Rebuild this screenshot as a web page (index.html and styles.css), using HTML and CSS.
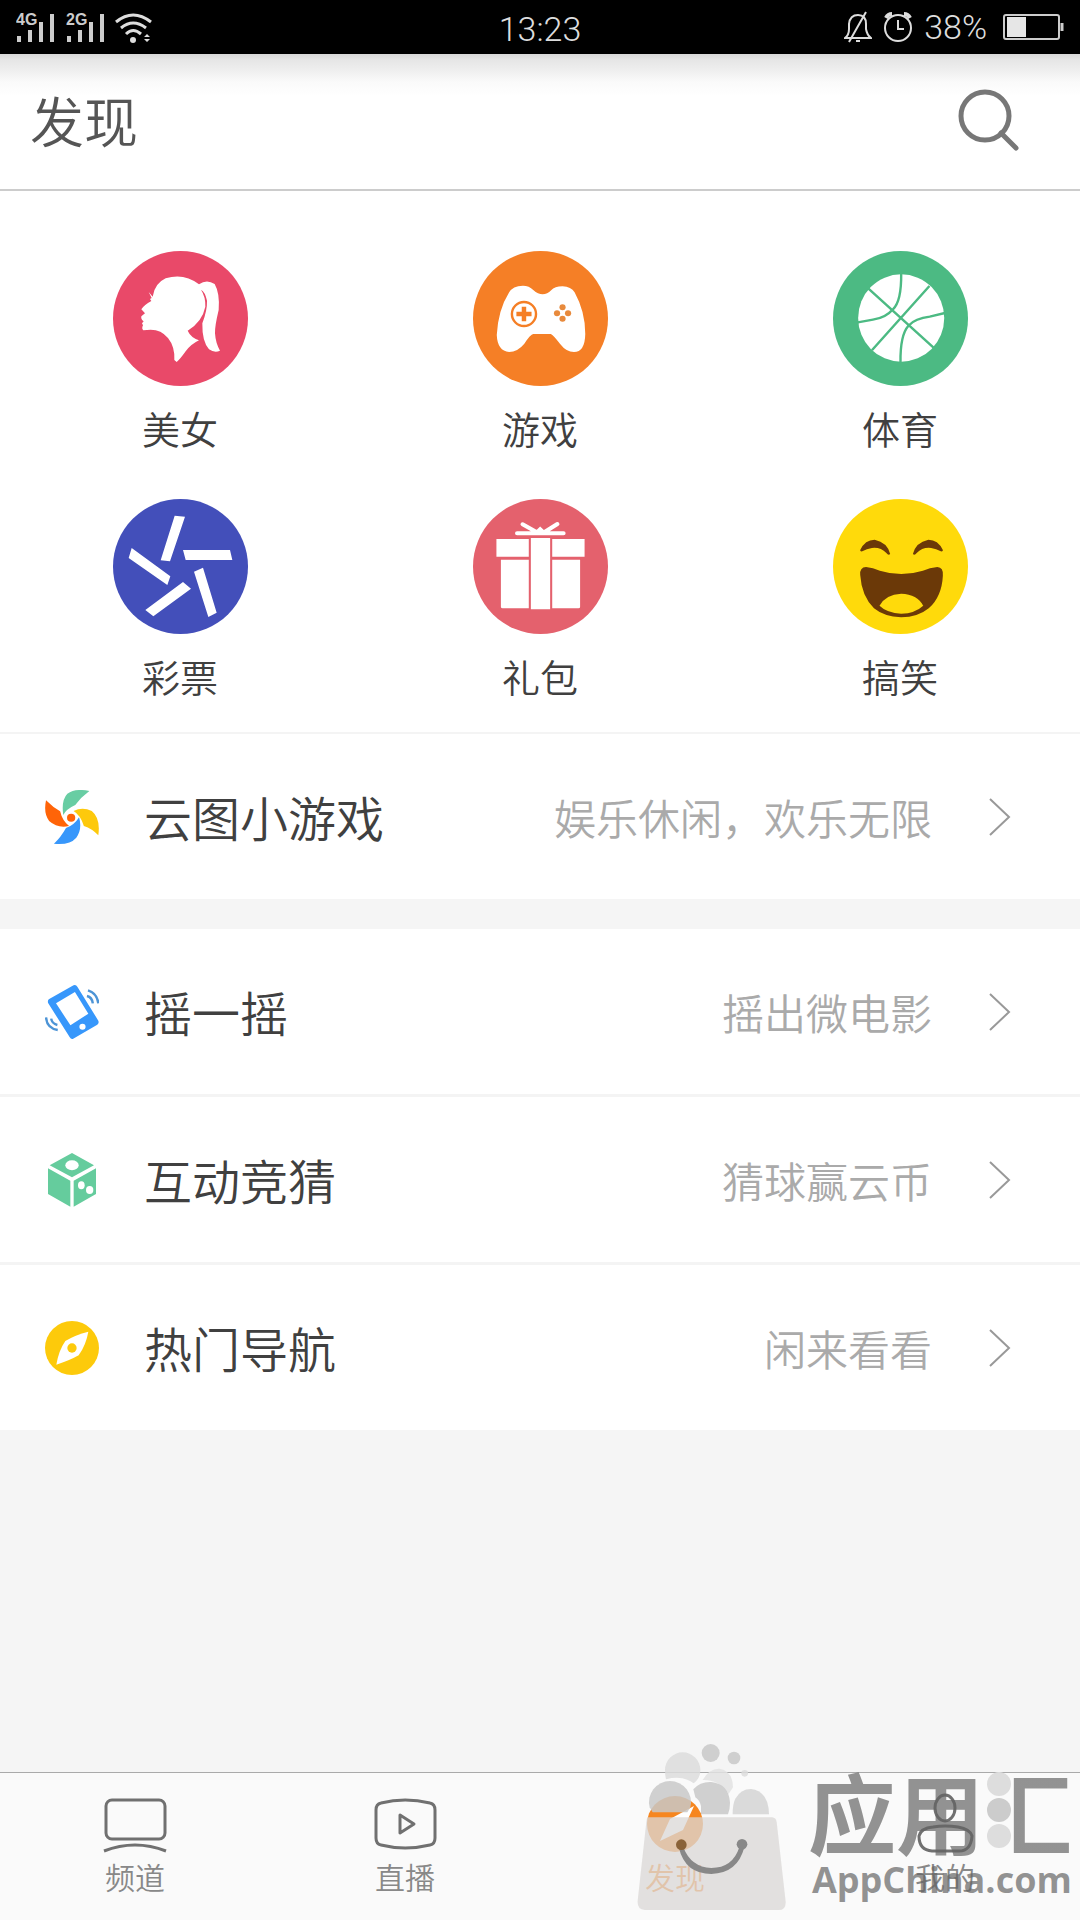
FILE: index.html
```html
<!DOCTYPE html>
<html lang="zh-CN">
<head>
<meta charset="utf-8">
<meta name="viewport" content="width=device-width, initial-scale=1">
<title>发现</title>
<link rel="stylesheet" href="styles.css">
</head>
<body>
<div class="app">
  <div class="status">
    <div class="status-side">
      <svg class="signals" viewBox="0 0 90 32" width="90" height="32" fill="#ccc">
        <path d="M1 25h4v6h-4zM12 19h4v12h-4zM23 11h4v20h-4zM34 3h4v28h-4zM51 25h4v6h-4zM62 19h4v12h-4zM73 11h4v20h-4zM84 3h4v28h-4z"/>
        <text class="net" x="0" y="14">4G</text>
        <text class="net" x="50" y="14">2G</text>
      </svg>
      <svg viewBox="0 0 38 32" width="38" height="32" fill="none" stroke="#ddd" stroke-width="3">
        <path d="M1 11Q18 -3 36 11M6 17Q18 7 31 17M11 23Q18 16 26 23"/>
        <circle cx="18" cy="29" r="3" fill="#ddd" stroke="none"/>
        <path d="M29 26l3-3 3 3zM29 28h6l-3 3z" fill="#ddd" stroke="none"/>
      </svg>
    </div>
    <time class="clock">13:23</time>
    <div class="status-side status-right">
      <svg viewBox="0 0 28 32" width="28" height="32" fill="none" stroke="#ddd" stroke-width="2">
        <path d="M1 27Q5 24 5 18V13Q6 4 14 4Q22 4 22 13V18Q23 24 27 27ZM22 1L5 31M12 30h4"/>
      </svg>
      <svg viewBox="0 0 28 32" width="28" height="32" fill="none" stroke="#ddd" stroke-width="2">
        <circle cx="14" cy="17" r="13"/><path d="M14 9v9h6"/><path d="M2 7q2-4 6-4M26 7q-2-4-6-4" stroke-width="4"/>
      </svg>
      <span class="percent">38%</span>
      <svg viewBox="0 0 61 32" width="61" height="32" fill="none" stroke="#ccc" stroke-width="2">
        <rect x="1" y="4" width="55" height="24" rx="2"/><path d="M4 6h19v20h-19z" fill="#e6e6e6" stroke="none"/><path d="M59 12v8" stroke-width="3"/>
      </svg>
    </div>
  </div>

  <header class="header">
    <h1 class="title">发现</h1>
    <button class="search" type="button" aria-label="搜索">
      <svg viewBox="0 0 62 64" width="62" height="64" fill="none" stroke="#777" stroke-width="5">
        <circle cx="27" cy="28" r="24"/><path d="M43 45L58 60" stroke-linecap="round"/>
      </svg>
    </button>
  </header>

  <main class="main">
    <nav class="tiles" aria-label="分类">
      <a class="tile" href="#beauty">
        <span class="disc disc-pink"><svg viewBox="67 63 405 405" fill="#fff">
          <path d="M186 200Q192 160 225 145Q280 128 325 163Q348 146 372 162Q388 190 384 240Q372 290 373 310Q375 340 388 362Q372 370 355 358Q334 335 335 280Q350 240 349 212Q343 185 331 179Q345 200 344 230Q335 275 291 302Q300 322 325 331Q300 343 285 364Q268 388 258 396L251 390Q253 350 232 324Q212 299 180 299L158 301Q152 296 157 286L154 280L159 274Q150 268 152 259L163 250L152 238Q160 225 182 213L178 207L183 204L174 186Z"/>
        </svg></span>
        <span class="tile-label">美女</span>
      </a>
      <a class="tile" href="#game">
        <span class="disc disc-orange"><svg viewBox="65 63 392 405" preserveAspectRatio="none" fill="#fff">
          <path d="M170 187Q180 168 210 167Q228 167 240 180Q254 193 267 193Q281 193 292 181Q302 169 325 169Q350 170 360 187Q391 245 391 312Q390 366 358 366Q336 366 318 342Q298 315 291 312H240Q232 313 214 341Q194 366 170 366Q136 363 134 315Q138 240 170 187Z"/>
          <ellipse cx="213" cy="252" rx="35" ry="36" fill="none" stroke="#f57f26" stroke-width="7"/>
          <path d="M213 230v44M191 252h44" stroke="#f57f26" stroke-width="13"/>
          <g fill="#e88a3c"><circle cx="325" cy="232" r="9"/><circle cx="325" cy="266" r="9"/><circle cx="309" cy="250" r="9"/><circle cx="341" cy="250" r="9"/></g>
        </svg></span>
        <span class="tile-label">游戏</span>
      </a>
      <a class="tile" href="#sport">
        <span class="disc disc-green"><svg viewBox="1109 63 392 405" preserveAspectRatio="none" fill="none" stroke="#4cba83" stroke-width="7">
          <ellipse cx="1307" cy="264" rx="125" ry="131" fill="#fff" stroke="none"/>
          <path d="M1212 176L1401 353M1389 168L1222 361M1307 130Q1308 215 1283 238Q1262 264 1225 269L1181 277M1305 396Q1304 315 1328 287Q1348 265 1390 260L1434 249"/>
        </svg></span>
        <span class="tile-label">体育</span>
      </a>
      <a class="tile" href="#lottery">
        <span class="disc disc-blue"><svg viewBox="66 57 405 405" fill="#fff">
          <path d="M251 107L282 110L237 244L209 241ZM276 210H417L424 240H284ZM336 263L377 398L352 411L309 275ZM276 306L300 326L187 409L163 390ZM122 204L238 289L229 315L113 234Z"/>
        </svg></span>
        <span class="tile-label">彩票</span>
      </a>
      <a class="tile" href="#gift">
        <span class="disc disc-rose"><svg viewBox="65 57 392 405" preserveAspectRatio="none" fill="#fff">
          <path d="M133 177H227V230H133ZM295 177H389V230H295ZM146 239H227V385H151Q146 385 146 380ZM295 239H376V380Q376 385 371 385H295ZM233 174H289V388H233Z"/>
          <path d="M193 160H328M209 133L249 156M310 132L273 156M252 156L260 148L268 156" fill="none" stroke="#fff" stroke-width="12" stroke-linecap="round"/>
        </svg></span>
        <span class="tile-label">礼包</span>
      </a>
      <a class="tile" href="#funny">
        <span class="disc disc-yellow"><svg viewBox="1109 57 392 405" preserveAspectRatio="none" fill="#6b3908">
          <path d="M1188 210Q1202 179 1230 179Q1267 187 1275 222Q1270 228 1264 219Q1247 201 1222 204Q1207 206 1194 214Q1187 215 1188 210ZM1428 210Q1414 179 1386 179Q1349 187 1341 222Q1346 228 1352 219Q1369 201 1394 204Q1409 206 1422 214Q1429 215 1428 210ZM1188 285Q1186 262 1205 261Q1225 263 1245 272Q1307 292 1370 272Q1390 263 1412 261Q1430 262 1428 287Q1425 350 1387 385Q1355 412 1307 412Q1257 410 1228 385Q1192 348 1188 285Z"/>
          <path d="M1244 377Q1262 343 1307 341Q1354 343 1371 377Q1347 400 1307 401Q1266 399 1244 377Z" fill="#ffda0b"/>
        </svg></span>
        <span class="tile-label">搞笑</span>
      </a>
    </nav>

    <div class="group">
      <a class="row" href="#minigame">
        <svg class="row-icon" viewBox="131 180 157 162" preserveAspectRatio="none">
          <path d="M184 255Q178 210 196 191Q220 174 260 183Q236 201 219 225Q193 237 184 255Z" fill="#68cda3"/>
          <path d="M214 243Q240 229 267 243Q293 265 286 316Q268 296 244 288Q234 255 214 243Z" fill="#fdc90c"/>
          <path d="M134 211Q154 232 175 244Q181 272 201 288Q168 296 143 273Q126 250 134 211Z" fill="#ff6408"/>
          <path d="M230 262Q240 296 222 323Q203 346 157 341Q177 322 192 294Q216 286 230 262Z" fill="#3797fb"/>
          <circle cx="207" cy="263" r="12" fill="#ff6408"/>
        </svg>
        <span class="row-title">云图小游戏</span>
        <span class="row-note">娱乐休闲，欢乐无限</span>
        <svg class="chevron" viewBox="0 0 22 38"><path d="M1 1L20 19L1 37"/></svg>
      </a>
    </div>

    <div class="group">
      <a class="row" href="#shake">
        <svg class="row-icon" viewBox="131 765 157 162" preserveAspectRatio="none" fill="none" stroke="#4d94d6" stroke-width="7">
          <path d="M142 808L214 766Q221 763 225 770L286 872Q289 879 283 884L213 926Q207 929 203 922L140 819Q138 812 142 808ZM163 820L205 886L257 851L218 786Z" fill="#3797fb" fill-rule="evenodd" stroke="none"/>
          <circle cx="240" cy="890" r="9" fill="#fff" stroke="none"/>
          <path d="M253 798Q268 802 270 820M256 781Q283 790 286 820M149 866Q151 881 167 885M134 862Q136 895 168 900"/>
        </svg>
        <span class="row-title">摇一摇</span>
        <span class="row-note">摇出微电影</span>
        <svg class="chevron" viewBox="0 0 22 38"><path d="M1 1L20 19L1 37"/></svg>
      </a>
      <a class="row" href="#guess">
        <svg class="row-icon" viewBox="135 130 162 162" fill="#65cc9d">
          <path d="M216 130L282 167L216 203L149 167ZM144 176L211 213V291L144 253ZM288 176V253L221 291V213Z"/>
          <g fill="#fff"><ellipse cx="216" cy="167" rx="20" ry="15"/><ellipse cx="244" cy="227" rx="10" ry="12"/><ellipse cx="269" cy="241" rx="11" ry="12"/></g>
        </svg>
        <span class="row-title">互动竞猜</span>
        <span class="row-note">猜球赢云币</span>
        <svg class="chevron" viewBox="0 0 22 38"><path d="M1 1L20 19L1 37"/></svg>
      </a>
      <a class="row" href="#guide">
        <svg class="row-icon" viewBox="135 633 162 162">
          <circle cx="216" cy="714" r="81" fill="#fdca0b"/>
          <path d="M265 665Q258 705 236 736Q208 752 169 764Q176 722 196 693Q225 675 265 665Z" fill="#fff"/><circle cx="216" cy="714" r="14" fill="#fdca0b"/>
        </svg>
        <span class="row-title">热门导航</span>
        <span class="row-note">闲来看看</span>
        <svg class="chevron" viewBox="0 0 22 38"><path d="M1 1L20 19L1 37"/></svg>
      </a>
    </div>
  </main>

  <nav class="tabs" aria-label="主导航">
    <a class="tab" href="#channel">
      <svg class="tab-icon" viewBox="0 0 64 56"><rect x="3" y="3" width="59" height="39" rx="6"/><path d="M1 54Q32 42 63 54"/></svg>
      <span>频道</span>
    </a>
    <a class="tab" href="#live">
      <svg class="tab-icon" viewBox="0 0 64 56"><path d="M3 13Q3 7 8 6Q32 0 57 6Q62 7 62 13V41Q62 47 57 48Q32 54 8 48Q3 47 3 41ZM27 18L41 27L27 36Z"/></svg>
      <span>直播</span>
    </a>
    <a class="tab tab-active" href="#discover" aria-current="page">
      <svg class="tab-icon tab-icon-fill" viewBox="0 0 64 56"><circle cx="32" cy="27" r="28" fill="#f6861f"/><path d="M51 9L40 33L17 44L27 22Z" fill="#fff"/></svg>
      <span>发现</span>
    </a>
    <a class="tab" href="#mine">
      <svg class="tab-icon" viewBox="0 0 64 56"><ellipse cx="32" cy="11" rx="10" ry="13"/><path d="M6 39Q8 31 20 30Q32 28 45 30Q57 32 59 39Q58 54 46 54H19Q6 53 6 39Z"/></svg>
      <span>我的</span>
    </a>
  </nav>

  <div class="watermark">
    <svg class="bag" viewBox="110 30 450 510">
      <g fill="#dcdcdc" fill-opacity=".85">
        <path d="M197 120A53 53 0 0 1 303 120Q303 145 283 160Q250 135 200 148Q197 135 197 120Z"/>
        <path d="M310 150Q330 115 360 116Q400 122 401 172L388 192Q360 148 310 150Z" fill="#e2e2e2"/>
        <circle cx="436" cy="130" r="10"/>
      </g>
      <g fill="#c8c8c8" fill-opacity=".85">
        <circle cx="334" cy="69" r="27"/><circle cx="404" cy="84" r="19"/>
        <path d="M151 232A63 63 0 1 1 273 232L264 247H160Z"/>
        <path d="M282 178Q302 155 335 156Q389 162 392 218Q392 238 386 253H305V228Q302 212 288 202Z"/>
        <path d="M400 253Q400 222 408 206Q424 177 455 177Q508 184 509 253Z" fill="#d4d4d4"/>
      </g>
      <path d="M145 262H518Q530 263 532 276L559 515Q560 540 538 540H136Q113 538 115 512L141 276Q143 263 145 262Z" fill="#dad8d6" fill-opacity=".76"/>
      <path d="M239 355Q258 432 336 432Q415 430 435 352L420 352Q400 414 336 414Q275 412 252 352Z" fill="#888"/>
      <circle cx="246" cy="344" r="16" fill="#8a6238"/><circle cx="428" cy="343" r="16" fill="#888"/>
    </svg>
    <div class="brand">
      <div class="brand-name"><span>应用</span><span class="brand-last">汇<svg class="brand-dots" viewBox="0 0 24 78"><circle cx="12" cy="13" r="12" fill="#ddd"/><circle cx="12" cy="39" r="12" fill="#ccc"/><circle cx="12" cy="65" r="12" fill="#ddd"/></svg></span></div>
      <div class="brand-url">AppChina.com</div>
    </div>
  </div>
</div>
</body>
</html>
```
FILE: styles.css
```css
* { box-sizing: border-box; }
body {
  margin: 0;
  background: #f5f5f5;
  color: #404040;
  font-family: "Noto Sans CJK SC", "Noto Sans", sans-serif;
  font-weight: 350;
}
a { color: inherit; text-decoration: none; }
svg { display: block; flex: none; }

.app {
  position: relative;
  display: flex;
  flex-direction: column;
  min-height: 100vh;
  overflow: hidden;
}

/* Status bar */
.status {
  display: flex;
  align-items: center;
  height: 54px;
  padding: 0 16px;
  background: #000;
  color: #ddd;
  font-family: Roboto, sans-serif;
  font-weight: 300;
}
.status-side { display: flex; flex: 1; align-items: center; gap: 9px; }
.status-right { justify-content: flex-end; gap: 12px; }
.percent { margin-right: 4px; }
.net { font: 700 16px "Liberation Sans", sans-serif; }
.clock { font-size: 34px; line-height: 54px; padding-top: 4px; }
.percent { font-size: 34px; line-height: 54px; }

/* Header */
.header {
  display: flex;
  align-items: center;
  justify-content: space-between;
  height: 137px;
  padding: 0 60px 4px 30px;
  border-bottom: 2px solid #ccc;
  background: linear-gradient(#d8d8d8 0, #e6e6e6 6px, #f0f0f0 18px, #fafafa 28px, #fff 42px);
}
.title { margin: 0; color: #555; font-size: 54px; font-weight: 350; line-height: 80px; }
.search { padding: 0; border: 0; background: none; }

/* Category tiles */
.main { flex: 1; }
.tiles {
  display: grid;
  grid-template-columns: repeat(3, 1fr);
  row-gap: 49px;
  padding: 60px 0 34px;
  border-bottom: 2px solid #f4f4f4;
  background: #fff;
}
.tile { display: flex; flex-direction: column; align-items: center; gap: 20px; }
.tile-label { font-size: 38px; line-height: 44px; }
.disc { width: 135px; height: 135px; border-radius: 50%; overflow: hidden; }
.disc svg { width: 100%; height: 100%; }
.disc-pink { background: #e94969; }
.disc-orange { background: #f57f26; }
.disc-green { background: #4cba83; }
.disc-blue { background: #434fba; }
.disc-rose { background: #e4616d; }
.disc-yellow { background: #ffda0b; }

/* List rows */
.group { background: #fff; }
.group + .group { margin-top: 30px; }
.row {
  display: flex;
  align-items: center;
  height: 165px;
  padding: 0 69px 0 45px;
}
.row + .row { height: 168px; border-top: 3px solid #f4f4f4; }
.row-icon { width: 54px; height: 54px; margin-right: 45px; }
.row-title { padding-bottom: 2px; font-size: 48px; line-height: 72px; }
.row-note { margin-left: auto; color: #aaa; font-size: 42px; line-height: 72px; }
.chevron {
  width: 22px;
  height: 38px;
  margin-left: 57px;
  fill: none;
  stroke: #999;
  stroke-width: 2;
}

/* Bottom tabs */
.tabs {
  display: grid;
  grid-template-columns: repeat(4, 1fr);
  height: 148px;
  padding-top: 24px;
  border-top: 1px solid #aaa;
  background: #fafafa;
}
.tab {
  display: flex;
  flex-direction: column;
  align-items: center;
  gap: 5px;
  color: #888;
  font-size: 30px;
  line-height: 36px;
}
.tab-active { color: #f6861f; }
.tab-icon {
  width: 64px;
  height: 56px;
  overflow: visible;
  fill: none;
  stroke: #707070;
  stroke-width: 3;
  stroke-linejoin: round;
}
.tab-icon-fill { stroke: none; }

/* Store watermark laid over the tab bar */
.watermark {
  position: absolute;
  right: 8px;
  bottom: 10px;
  display: flex;
  align-items: flex-end;
  gap: 22px;
  pointer-events: none;
}
.bag { width: 150px; height: 170px; }
.brand {
  padding-bottom: 5px;
  color: rgba(99, 99, 99, 0.69);
  font-weight: 700;
}
.brand-name { display: flex; font-size: 88px; line-height: 90px; }
.brand-last {
  position: relative;
  color: transparent;
  background: linear-gradient(90deg, transparent 33%, rgba(99, 99, 99, 0.69) 33%);
  -webkit-background-clip: text;
  background-clip: text;
}
.brand-dots { position: absolute; left: 3px; top: 6px; width: 24px; height: 78px; }
.brand-url { padding-left: 4px; font-family: "Open Sans", sans-serif; font-size: 36px; line-height: 50px; }
```
